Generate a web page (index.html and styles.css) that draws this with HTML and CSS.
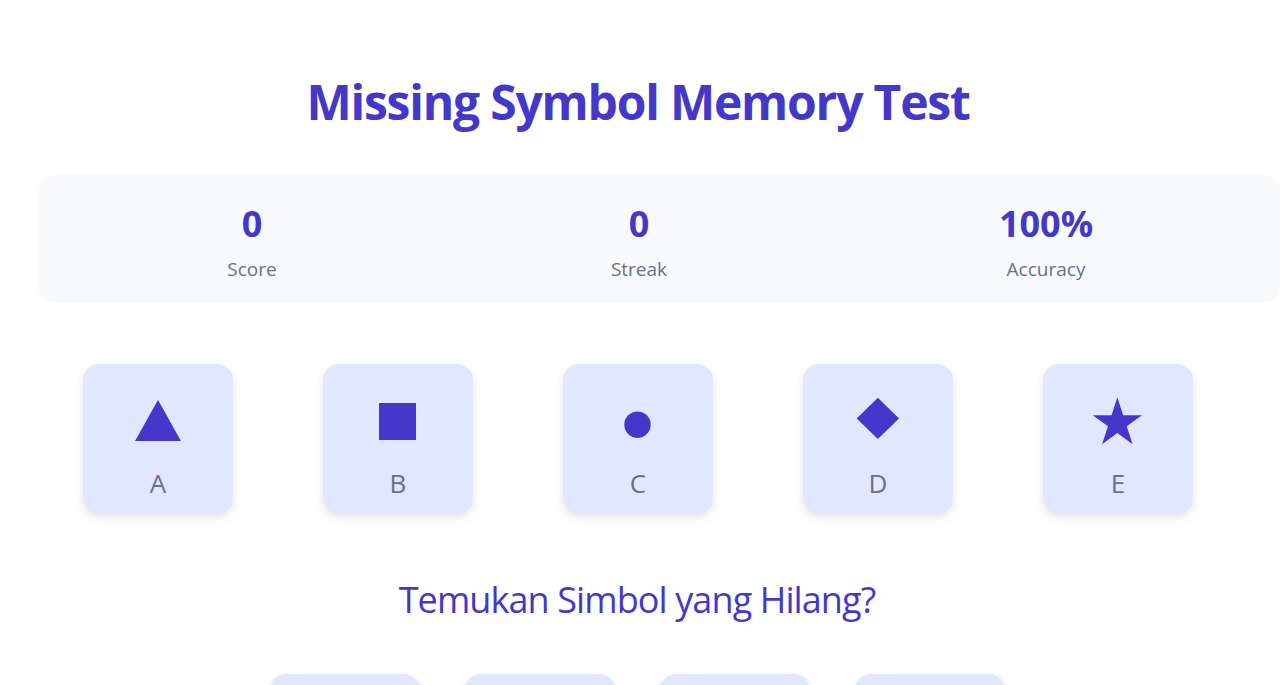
FILE: index.html
```html
<!DOCTYPE html>
<html lang="id">
<head>
<meta charset="utf-8">
<title>Missing Symbol Memory Test</title>
<link rel="stylesheet" href="styles.css">
</head>
<body>
<main class="app">
  <h1 class="title">Missing Symbol Memory Test</h1>

  <section class="stats">
    <div class="stat">
      <div class="stat-value">0</div>
      <div class="stat-label">Score</div>
    </div>
    <div class="stat">
      <div class="stat-value">0</div>
      <div class="stat-label">Streak</div>
    </div>
    <div class="stat">
      <div class="stat-value">100%</div>
      <div class="stat-label">Accuracy</div>
    </div>
  </section>

  <section class="symbols">
    <div class="card">
      <svg class="shape" viewBox="0 0 150 90" aria-hidden="true"><polygon points="52,77 75,36 98,77"/></svg>
      <div class="card-letter">A</div>
    </div>
    <div class="card">
      <svg class="shape" viewBox="0 0 150 90" aria-hidden="true"><rect x="56" y="39" width="37" height="37"/></svg>
      <div class="card-letter">B</div>
    </div>
    <div class="card">
      <svg class="shape" viewBox="0 0 150 90" aria-hidden="true"><circle cx="74.5" cy="60.7" r="13.2"/></svg>
      <div class="card-letter">C</div>
    </div>
    <div class="card">
      <svg class="shape" viewBox="0 0 150 90" aria-hidden="true"><polygon points="74.85,33.7 96,54.4 74.85,75 53.7,54.4"/></svg>
      <div class="card-letter">D</div>
    </div>
    <div class="card">
      <svg class="shape" viewBox="0 0 150 90" aria-hidden="true"><polygon points="74.35,33.3 80.17,51.19 98.98,51.2 83.77,62.26 89.57,80.15 74.35,69.1 59.13,80.15 64.93,62.26 49.72,51.2 68.53,51.19"/></svg>
      <div class="card-letter">E</div>
    </div>
  </section>

  <h2 class="question">Temukan Simbol yang Hilang?</h2>

  <section class="options">
    <button class="option" type="button"></button>
    <button class="option" type="button"></button>
    <button class="option" type="button"></button>
    <button class="option" type="button"></button>
  </section>
</main>
</body>
</html>
```

FILE: styles.css
```css
html, body {
  margin: 0;
  padding: 0;
  background: #ffffff;
  overflow: hidden;
}

body {
  font-family: "Open Sans", "Noto Sans", "Liberation Sans", sans-serif;
  color: #1f2937;
}

.app {
  display: flex;
  flex-direction: column;
  padding-top: 72px;
}

.title {
  margin: 0;
  text-align: center;
  font-size: 48px;
  line-height: 60px;
  font-weight: 700;
  letter-spacing: -1.2px;
  color: #4338ca;
  padding-right: 4px;
}

.stats {
  margin: 43px 0 0 38px;
  height: 128px;
  box-sizing: border-box;
  padding-top: 27px;
  background: #f8fafc;
  border-radius: 16px;
  display: grid;
  grid-template-columns: 428px 346px 1fr;
}

.stat {
  display: flex;
  flex-direction: column;
  align-items: center;
}

.stat-value {
  font-size: 36px;
  line-height: 44px;
  font-weight: 700;
  color: #4338ca;
}

.stat-label {
  margin-top: 9px;
  font-size: 19px;
  line-height: 28px;
  color: #6b7280;
}

.symbols {
  margin-top: 61px;
  display: flex;
  justify-content: center;
  gap: 90px;
  padding-right: 4px;
}

.card {
  width: 150px;
  height: 150px;
  border-radius: 16px;
  background: #e0e7ff;
  box-shadow: 0 4px 10px rgba(0, 0, 0, 0.1);
}

.shape {
  display: block;
  width: 150px;
  height: 90px;
  fill: #4338ca;
}

.card-letter {
  margin-top: 14px;
  text-align: center;
  font-size: 26px;
  line-height: 30px;
  color: #6b7280;
}

.question {
  margin: 64px 0 0;
  text-align: center;
  font-size: 36px;
  line-height: 44px;
  font-weight: 400;
  letter-spacing: -0.9px;
  color: #4338ca;
  padding-right: 6px;
}

.options {
  margin-top: 52px;
  display: flex;
  justify-content: center;
  gap: 45px;
  padding-right: 5px;
}

.option {
  width: 150px;
  height: 150px;
  border: none;
  padding: 0;
  border-radius: 16px;
  background: #e0e7ff;
  box-shadow: 0 4px 10px rgba(0, 0, 0, 0.1);
}
```
